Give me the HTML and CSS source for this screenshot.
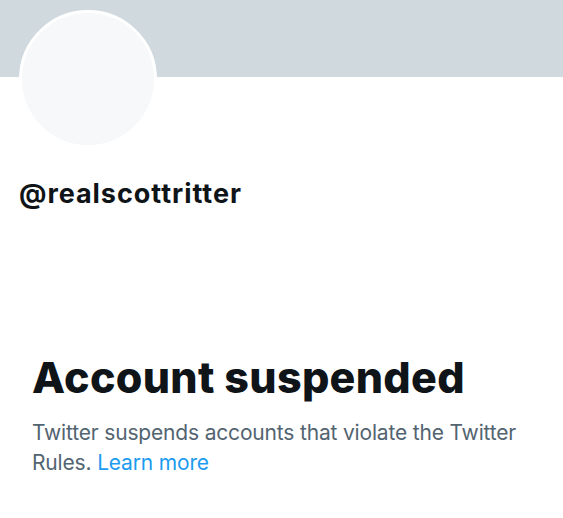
FILE: index.html
```html
<!DOCTYPE html>
<html>
<head>
<meta charset="utf-8">
<link rel="stylesheet" href="styles.css">
</head>
<body>
<div class="page">
  <div class="banner"></div>
  <div class="profile">
    <div class="avatar"></div>
    <div class="handle">@realscottritter</div>
  </div>
  <div class="notice">
    <h1 class="title">Account suspended</h1>
    <p class="desc">Twitter suspends accounts that violate the Twitter Rules. <a class="link" href="#">Learn more</a></p>
  </div>
</div>
</body>
</html>
```
FILE: styles.css
```css
* { box-sizing: border-box; }
html, body { margin: 0; padding: 0; background: #ffffff; }
body { font-family: Inter, "Noto Sans", sans-serif; color: #0f1419; }
.page { width: 563px; height: 518px; overflow: hidden; }
.banner { height: 77px; background: #cfd9de; }
.profile { padding: 0 0 0 19px; margin-top: -67px; }
.avatar {
  width: 138px; height: 138px; border-radius: 50%;
  background: #f7f8fa; border: 3px solid #ffffff;
}
.handle {
  margin-top: 30px; font-size: 27px; font-weight: 700; line-height: 32px;
  letter-spacing: 0.95px; padding-left: 0;
}
.notice { padding: 142px 33px 0 32px; }
.title {
  margin: 0; font-size: 43px; font-weight: 800; line-height: 50px; letter-spacing: 0.3px;
}
.desc {
  margin: 16px 0 0 0; font-size: 21px; line-height: 30px; color: #536471;
  letter-spacing: -0.17px;
}
.link { color: #1d9bf0; text-decoration: none; }
```
